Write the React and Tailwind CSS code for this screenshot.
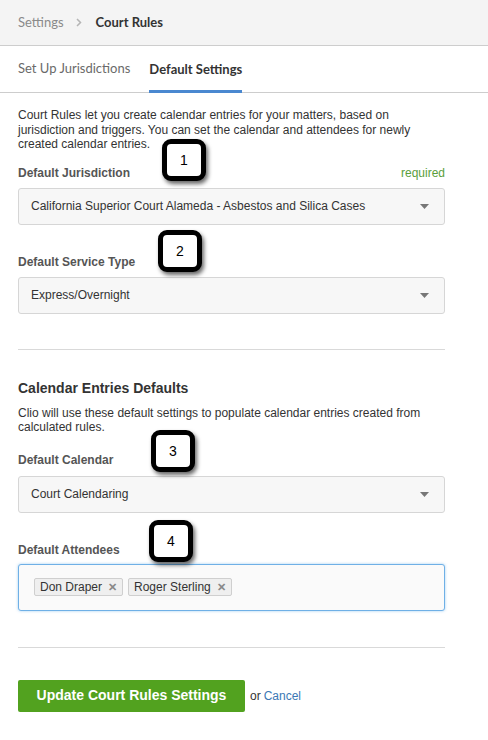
import React from "react";

function Callout({ n, className }) {
  return (
    <div
      className={
        "absolute w-[44px] h-[42px] rounded-[9px] border-[5px] border-black bg-white flex items-center justify-center text-[14px] text-black shadow-[2px_3px_4px_rgba(0,0,0,0.6)] " +
        className
      }
      style={{ fontFamily: '"Liberation Sans", Arial, sans-serif' }}
    >
      {n}
    </div>
  );
}

function Arrow() {
  return (
    <svg width="9" height="5" viewBox="0 0 9 5" className="block">
      <path d="M0 0 L9 0 L4.5 5 Z" fill="#777" />
    </svg>
  );
}

function Select({ value }) {
  return (
    <div className="h-[37px] w-full rounded-[3px] border border-[#d6d6d6] bg-[#f7f7f7] flex items-center justify-between pl-[12px] pr-[15px] text-[12px] text-[#333]">
      <span>{value}</span>
      <Arrow />
    </div>
  );
}

function Tag({ label }) {
  return (
    <span className="inline-flex items-center h-[18px] px-[5px] rounded-[2px] border border-[#cfcfcf] bg-[#efefef] text-[12px] text-[#333] leading-none">
      {label}
      <span className="ml-[6px] text-[11px] font-bold text-[#888]">✕</span>
    </span>
  );
}

export default function App() {
  return (
    <div
      className="relative w-[488px] h-[740px] bg-white text-[#333] overflow-hidden"
      style={{ fontFamily: '"Liberation Sans", Arial, sans-serif' }}
    >
      {/* header */}
      <div
        className="h-[46px] bg-[#f4f4f4] border-b border-[#cdcdcd] flex items-center pl-[18px] text-[13px]"
        style={{ fontFamily: 'Lato, "Open Sans", sans-serif' }}
      >
        <span className="text-[#8a8a8a]">Settings</span>
        <svg width="6" height="9" viewBox="0 0 6 9" className="ml-[12px] mr-[14px]">
          <path d="M1 1 L4.5 4.5 L1 8" stroke="#b5b5b5" strokeWidth="1.5" fill="none" />
        </svg>
        <span className="font-bold text-[#333]">Court Rules</span>
      </div>

      {/* tabs */}
      <div
        className="h-[47px] border-b border-[#cdcdcd] flex items-stretch pl-[18px] text-[13px]"
        style={{ fontFamily: 'Lato, "Open Sans", sans-serif' }}
      >
        <div className="flex items-center text-[#6a6a6a]">Set Up Jurisdictions</div>
        <div className="ml-[19px] flex items-center font-bold text-[#333] border-b-[3px] border-[#4a88d0] pt-[3px] -mb-px">
          Default Settings
        </div>
      </div>

      {/* body */}
      <div className="pl-[18px] pr-[43px]">
        <p className="mt-[15px] text-[12px] leading-[14.5px] text-[#333]">
          Court Rules let you create calendar entries for your matters, based on jurisdiction and triggers. You can set the calendar and attendees for newly created calendar entries.
        </p>

        <div className="mt-[14px] flex justify-between items-center h-[14px] text-[12px]">
          <span className="font-bold text-[#555]">Default Jurisdiction</span>
          <span className="text-[#5a9e3c]">required</span>
        </div>
        <div className="mt-[8px]">
          <Select value="California Superior Court Alameda - Asbestos and Silica Cases" />
        </div>

        <div className="mt-[30px] h-[14px] flex items-center text-[12px] font-bold text-[#555]">Default Service Type</div>
        <div className="mt-[8px]">
          <Select value="Express/Overnight" />
        </div>

        <div className="mt-[35px] border-t border-[#d9d9d9]" />

        <h2 className="mt-[31px] h-[16px] flex items-center text-[14px] font-bold text-[#333]">Calendar Entries Defaults</h2>
        <p className="mt-[9px] text-[12px] leading-[14.5px] text-[#333]">
          Clio will use these default settings to populate calendar entries created from calculated rules.
        </p>

        <div className="mt-[18px] h-[14px] flex items-center text-[12px] font-bold text-[#555]">Default Calendar</div>
        <div className="mt-[9px]">
          <Select value="Court Calendaring" />
        </div>

        <div className="mt-[30px] h-[14px] flex items-center text-[12px] font-bold text-[#555]">Default Attendees</div>
        <div className="mt-[7px] h-[47px] rounded-[3px] border border-[#6fb0e6] bg-[#fafafa] shadow-[0_0_3px_rgba(102,175,233,0.6)] flex items-center gap-[5px] pl-[15px]">
          <Tag label="Don Draper" />
          <Tag label="Roger Sterling" />
        </div>

        <div className="mt-[36px] border-t border-[#d9d9d9]" />

        <div className="mt-[32px] flex items-center">
          <button className="h-[32px] w-[227px] rounded-[2px] bg-[#52a21f] text-white text-[14px] font-bold">
            Update Court Rules Settings
          </button>
          <span className="ml-[5px] text-[12px] text-[#333]">or</span>
          <a className="ml-[3px] text-[12px] text-[#3b78b5]">Cancel</a>
        </div>
      </div>

      <Callout n="1" className="left-[162px] top-[139px]" />
      <Callout n="2" className="left-[158px] top-[230px]" />
      <Callout n="3" className="left-[151px] top-[430px]" />
      <Callout n="4" className="left-[149px] top-[520px]" />
    </div>
  );
}
